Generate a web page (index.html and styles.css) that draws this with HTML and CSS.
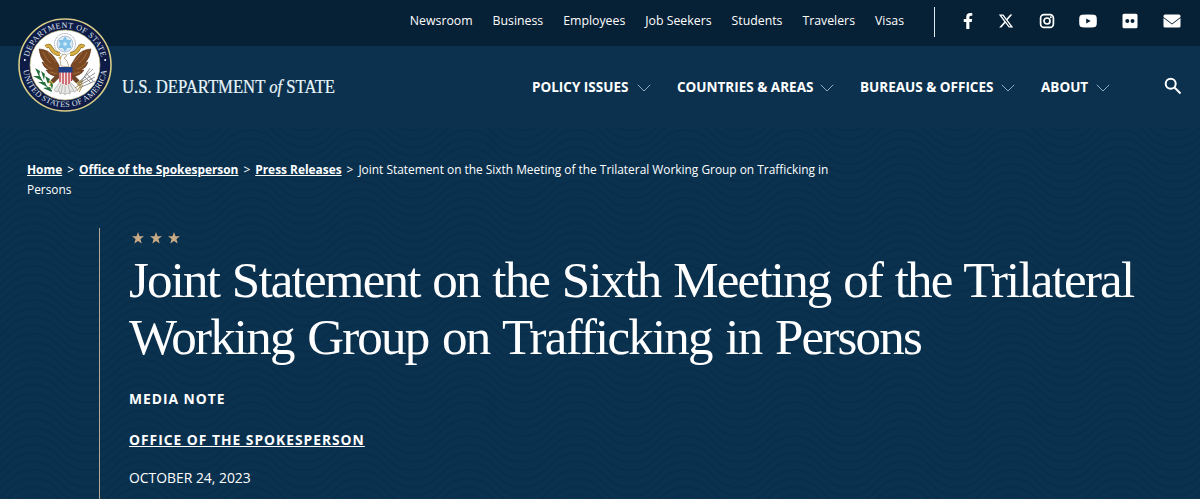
FILE: index.html
```html
<!DOCTYPE html>
<html lang="en">
<head>
  <meta charset="UTF-8">
  <meta name="viewport" content="width=device-width, initial-scale=1.0">
  <title>Joint Statement on the Sixth Meeting of the Trilateral Working Group on Trafficking in Persons</title>
  <link rel="stylesheet" href="styles.css">
</head>
<body>
  <!-- Top bar -->
  <div class="top-bar">
    <nav class="top-links">
      <a href="#">Newsroom</a>
      <a href="#">Business</a>
      <a href="#">Employees</a>
      <a href="#">Job Seekers</a>
      <a href="#">Students</a>
      <a href="#">Travelers</a>
      <a href="#">Visas</a>
    </nav>
    <div class="social">
      <a href="#" aria-label="Facebook"><svg width="10" height="16" viewBox="0 0 320 512"><path d="M279 288l14-93h-89v-60c0-25 12-50 52-50h41V6s-37-6-72-6c-73 0-121 44-121 125v70H23v93h81v224h100V288z"/></svg></a>
      <a href="#" aria-label="X"><svg width="16" height="16" viewBox="0 0 512 512"><path d="M389 48h71L306 224l181 240H345L234 319 107 464H36l165-188L27 48h145l101 133zm-25 374h39L151 88h-42z"/></svg></a>
      <a href="#" aria-label="Instagram"><svg width="16" height="16" viewBox="0 0 16 16"><rect class="line" x="1.6" y="1.6" width="12.8" height="12.8" rx="3.4"/><circle class="line" cx="8" cy="8" r="3"/><circle cx="11.8" cy="4.2" r="1"/></svg></a>
      <a href="#" aria-label="YouTube"><svg width="18" height="14" viewBox="0 0 18 14"><path fill-rule="evenodd" d="M3 .8Q9 .3 15 .8Q17.500 1 17.700 3.500Q18 7 17.700 10.500Q17.500 13 15 13.200Q9 13.700 3 13.200Q.5 13 .3 10.500Q0 7 .3 3.500Q.5 1 3 .8zM7.200 4.400v5.200L11.700 7z"/></svg></a>
      <a href="#" aria-label="Flickr"><svg width="16" height="16" viewBox="0 0 16 16"><path fill-rule="evenodd" d="M2 .8h12a1.500 1.500 0 0 1 1.500 1.500v11.400a1.500 1.500 0 0 1-1.500 1.500H2a1.500 1.500 0 0 1-1.500-1.500V2.300A1.500 1.500 0 0 1 2 .8zM5.300 6a2 2 0 1 0 0 4a2 2 0 1 0 0-4zM10.500 6a2 2 0 1 0 0 4a2 2 0 1 0 0-4z"/></svg></a>
      <a href="#" aria-label="Email"><svg width="18" height="14" viewBox="0 0 18 14"><path d="M2 .5h14a1.500 1.500 0 0 1 1.500 1.500v1L9 9.500 .5 3V2A1.500 1.500 0 0 1 2 .5zM.5 3.900L9 10.400l8.500-6.500V12a1.500 1.500 0 0 1-1.500 1.500H2A1.500 1.500 0 0 1 .5 12z"/></svg></a>
    </div>
  </div>

  <!-- Main header -->
  <header class="header">
    <a href="#" class="brand">
      <svg class="seal" viewBox="0 0 94 94">
        <defs>
          <path id="arc-top" d="M10 47a37 37 0 0 1 74 0"/>
          <path id="arc-bottom" d="M5 47a42 42 0 0 0 84 0"/>
        </defs>
        <circle cx="47" cy="47" r="46" fill="#0d1b46" stroke="#d8cd87" stroke-width="1.600"/>
        <circle cx="47" cy="47" r="35" fill="#fff" stroke="#c9bd7a" stroke-width=".6"/>
        <text class="seal-text"><textPath href="#arc-top" startOffset="50%" text-anchor="middle" textLength="100">DEPARTMENT OF STATE</textPath></text>
        <text class="seal-text"><textPath href="#arc-bottom" startOffset="50%" text-anchor="middle" textLength="121">UNITED STATES OF AMERICA</textPath></text>
        <circle cx="6.800" cy="42" r="1" fill="#fff"/>
        <circle cx="87.200" cy="42" r="1" fill="#fff"/>
        <!-- glory of stars -->
        <circle cx="47" cy="26" r="10.500" fill="#fff" stroke="#8b97a8" stroke-width=".8" stroke-dasharray="1.200 .5"/>
        <circle cx="47" cy="26" r="8" fill="#d7eaf6" stroke="#a6b6c6" stroke-width=".8"/>
        <path fill="#83c4ea" stroke="#5faada" stroke-width=".5" d="M47 19l2 3.500h4L51 26l2 3.500h-4L47 33l-2-3.500h-4l2-3.500-2-3.500h4z"/>
        <circle cx="47" cy="26" r="1.800" fill="#d7eefa"/>
        <!-- scroll -->
        <path fill="none" stroke="#8c6b1d" stroke-width="4" d="M28 29q3-3 5 1q3 6 9 6M66 29q-3-3-5 1q-3 6-9 6"/>
        <path fill="none" stroke="#d5af45" stroke-width="2.800" d="M28 29q3-3 5 1q3 6 9 6M66 29q-3-3-5 1q-3 6-9 6"/>
        <!-- wings -->
        <path fill="#794721" stroke="#55301a" stroke-width=".5" d="M21 31q9 0 15 8l5 8 1 12q-11-1-14-7l3 0q-6-3-7-8l3 1q-5-5-6-14zM73 31q-9 0-15 8l-5 8-1 12q11-1 14-7l-3 0q6-3 7-8l-3 1q5-5 6-14z"/>
        <path fill="none" stroke="#b98451" stroke-width=".6" d="M25 34q4 9 8 11m-7 0q5 6 9 6m-3 3l7 2M30 34q4 7 8 10M69 34q-4 9-8 11m7 0q-5 6-9 6m3 3l-7 2M64 34q-4 7-8 10"/>
        <!-- tail, head, legs -->
        <path fill="#e8e8e6" stroke="#8c8c8c" stroke-width=".5" d="M42 64l-6 8 2 2 3-1 1 3 3-1 2 2 2-2 3 1 1-3 4 1 2-3-7-7z"/>
        <path stroke="#9a9a9a" stroke-width=".6" d="M43 66l-3 7M45 66l-2 9M47 66v10M50 66l2 9M52 66l4 7"/>
        <path fill="#fafafa" stroke="#a99467" stroke-width=".7" d="M43 48l-1-7 2-4 3-1 2 2-3 2 3 3 2 6z"/>
        <path fill="#d1a53c" d="M43 38l-3 2 3 1z"/>
        <path fill="none" stroke="#6a4528" stroke-width="4.500" d="M40 58l-6 6M54 58l6 6"/>
        <path fill="none" stroke="#c39b34" stroke-width="2" d="M29 63l5 2-2 3M65 63l-5 2 2 3"/>
        <!-- shield -->
        <path fill="#f2e6e3" d="M41 50h13v11q-1 5-6.500 7Q42 66 41 61z"/>
        <path stroke="#bd3443" stroke-width="1.300" d="M42 54v10M45 54v12M48 54v13M51 54v12M53.500 54v9"/>
        <path fill="#1c3c86" d="M40.500 49h14v5.500h-14z"/>
        <!-- olive branch and arrows -->
        <path fill="none" stroke="#24703d" stroke-width="1" d="M19 52q4 13 15 21"/>
        <path fill="#24703d" d="M17 50l5 3-1 5zM15 58l7 0 2 5zM20 64l7 0 2 5zM25 70l7-1 2 5zM23 53l4 3-1 6zM27 58l5 3-2 5zM32 63l3 4-1 5z"/>
        <path stroke="#77797d" stroke-width=".8" d="M59 67l18-12M60 68l17-9M60 65l15-14M61 70l16-7M63 64l9-14M68 55l7 8M66 58l7 7"/>
        <path stroke="#a98c50" stroke-width="1" d="M57 70l7-5M59 73l5-7M61 74l4-7"/>
      </svg>
      <svg class="brand-name" width="220" height="30" viewBox="0 0 220 30"><text x="0" y="20" textLength="213" lengthAdjust="spacingAndGlyphs">U.S. DEPARTMENT <tspan font-style="italic">of</tspan> STATE</text></svg>
    </a>
    <nav class="main-nav">
      <a href="#"><span class="w-policy">POLICY ISSUES</span><svg class="chevron" viewBox="0 0 14 8"><path d="M.8.800L7 7 13.200.800"/></svg></a>
      <a href="#"><span class="w-countries">COUNTRIES &amp; AREAS</span><svg class="chevron" viewBox="0 0 14 8"><path d="M.8.800L7 7 13.200.800"/></svg></a>
      <a href="#"><span class="w-bureaus">BUREAUS &amp; OFFICES</span><svg class="chevron" viewBox="0 0 14 8"><path d="M.8.800L7 7 13.200.800"/></svg></a>
      <a href="#"><span class="w-about">ABOUT</span><svg class="chevron" viewBox="0 0 14 8"><path d="M.8.800L7 7 13.200.800"/></svg></a>
    </nav>
    <a href="#" class="search" aria-label="Search"><svg width="18" height="18" viewBox="0 0 18 18"><circle cx="6.700" cy="6.700" r="5"/><path d="M10.500 10.500l6 6"/></svg></a>
  </header>

  <!-- Page banner -->
  <main class="banner">
    <svg class="waves" width="1200" height="371">
      <defs>
        <pattern id="wave" width="108" height="8.5" patternUnits="userSpaceOnUse" patternTransform="translate(33 2) scale(1.0065 1)">
          <path d="M0-34C27-34 27-8 54-8S81-34 108-34M0-25.500C27-25.500 27 .5 54 .5S81-25.500 108-25.500M0-17C27-17 27 9 54 9S81-17 108-17M0-8.500C27-8.500 27 17.500 54 17.500S81-8.500 108-8.500M0 0C27 0 27 26 54 26S81 0 108 0M0 8.500C27 8.500 27 34.500 54 34.500S81 8.500 108 8.500"/>
        </pattern>
      </defs>
      <rect width="1200" height="371" fill="url(#wave)"/>
    </svg>
    <div class="breadcrumb">
      <a href="#">Home</a><i>&gt;</i><a href="#">Office of the Spokesperson</a><i>&gt;</i><a href="#">Press Releases</a><i>&gt;</i>Joint Statement on the Sixth Meeting of the Trilateral Working Group on Trafficking in Persons
    </div>
    <div class="article-head">
      <div class="stars">
        <svg viewBox="0 0 12 12"><path d="M6 0l1.500 4.200H12L8.400 7l1.300 4.500L6 8.900l-3.700 2.600L3.600 7 0 4.200h4.500z"/></svg>
        <svg viewBox="0 0 12 12"><path d="M6 0l1.500 4.200H12L8.400 7l1.300 4.500L6 8.900l-3.700 2.600L3.600 7 0 4.200h4.500z"/></svg>
        <svg viewBox="0 0 12 12"><path d="M6 0l1.500 4.200H12L8.400 7l1.300 4.500L6 8.900l-3.700 2.600L3.600 7 0 4.200h4.500z"/></svg>
      </div>
      <h1><span class="line-one">Joint Statement on the Sixth Meeting of the Trilateral</span> <span class="line-two">Working Group on Trafficking in Persons</span></h1>
      <p class="doc-type">MEDIA NOTE</p>
      <p class="office"><a href="#">OFFICE OF THE SPOKESPERSON</a></p>
      <p class="date">OCTOBER 24, 2023</p>
    </div>
  </main>
</body>
</html>
```

FILE: styles.css
```css
* {
  box-sizing: border-box;
}
body {
  margin: 0;
  height: 499px;
  overflow: hidden;
  background: #0a314e;
  color: #fff;
  font-family: "Open Sans", "Noto Sans", sans-serif;
}
a {
  color: inherit;
  text-decoration: none;
}
svg {
  display: block;
}

/* top bar */
.top-bar {
  display: flex;
  justify-content: flex-end;
  height: 46px;
  padding-right: 19px;
  background: #062035;
}
.top-links {
  display: flex;
  gap: 20px;
  padding-top: 12px;
  margin-right: 30px;
  font-size: 12.3px;
  line-height: 18px;
}
.social {
  display: flex;
  align-items: center;
  justify-content: space-between;
  width: 247px;
  height: 30px;
  margin-top: 7px;
  padding-left: 28px;
  border-left: 1px solid #dce9ef;
  fill: #fff;
}
.social svg {
  margin-top: -2px;
}
.social .line {
  fill: none;
  stroke: #fff;
  stroke-width: 1.7;
}

/* header */
.header {
  display: flex;
  height: 82px;
  background: #0b314e;
}
.brand {
  display: flex;
  width: 532px;
}
.seal {
  flex: none;
  width: 94px;
  height: 94px;
  margin: -28px 10px 0 18px;
}
.seal-text {
  fill: #dfe3ee;
  font-family: "Liberation Serif", serif;
  font-size: 8.2px;
}
.brand-name {
  flex: none;
  margin-top: 27px;
  fill: #e9f5fb;
  stroke: #e9f5fb;
  stroke-width: 0.2;
  font-family: "Liberation Serif", serif;
  font-size: 18px;
}
.main-nav {
  display: flex;
  gap: 26px;
  padding-top: 31px;
  font-size: 13.5px;
  font-weight: 700;
  line-height: 20px;
}
.main-nav a {
  display: flex;
  gap: 8px;
  white-space: nowrap;
}
.w-policy {
  width: 97px;
}
.w-countries {
  width: 135px;
}
.w-bureaus {
  width: 133px;
}
.w-about {
  width: 47px;
}
.chevron {
  width: 14px;
  height: 8px;
  margin-top: 7px;
  fill: none;
  stroke: #8fa9bb;
  stroke-width: 1;
}
.search {
  margin: 31px 18px 0 auto;
}
.search svg {
  fill: none;
  stroke: #fff;
  stroke-width: 2;
}

/* banner */
.banner {
  position: relative;
  height: 371px;
  padding: 31px 0 0 27px;
}
.waves {
  position: absolute;
  top: 0;
  left: 0;
  z-index: -1;
}
.waves path {
  fill: none;
  stroke: #082e4b;
  stroke-width: 2.2;
}
.breadcrumb {
  width: 820px;
  font-size: 11.9px;
  line-height: 20px;
}
.breadcrumb a {
  font-weight: 700;
  text-decoration: underline;
}
.breadcrumb i {
  margin: 0 5px;
  font-style: normal;
}
.article-head {
  height: 271px;
  margin: 29px 0 0 72px;
  padding: 4px 0 0 29px;
  border-left: 1px solid #b5a995;
}
.stars {
  display: flex;
  gap: 6px;
  padding-left: 3px;
}
.stars svg {
  width: 12px;
  height: 12px;
  fill: #c8ab85;
}
h1 {
  margin: 8px 0 0;
  font-family: "Liberation Serif", serif;
  font-size: 51px;
  font-weight: 400;
  line-height: 57px;
}
h1 span {
  display: block;
  white-space: nowrap;
}
.line-one {
  letter-spacing: -1.8px;
  word-spacing: 1.7px;
}
.line-two {
  letter-spacing: -1.8px;
  word-spacing: 2.6px;
}
p {
  margin: 0;
  line-height: 20px;
}
.doc-type {
  margin-top: 23px;
  font-size: 13.8px;
  font-weight: 700;
  letter-spacing: 1px;
}
.office {
  margin-top: 21px;
  font-size: 13.8px;
  font-weight: 700;
  letter-spacing: 1px;
}
.office a {
  text-decoration: underline;
}
.date {
  margin-top: 18px;
  font-size: 13.9px;
}
```
